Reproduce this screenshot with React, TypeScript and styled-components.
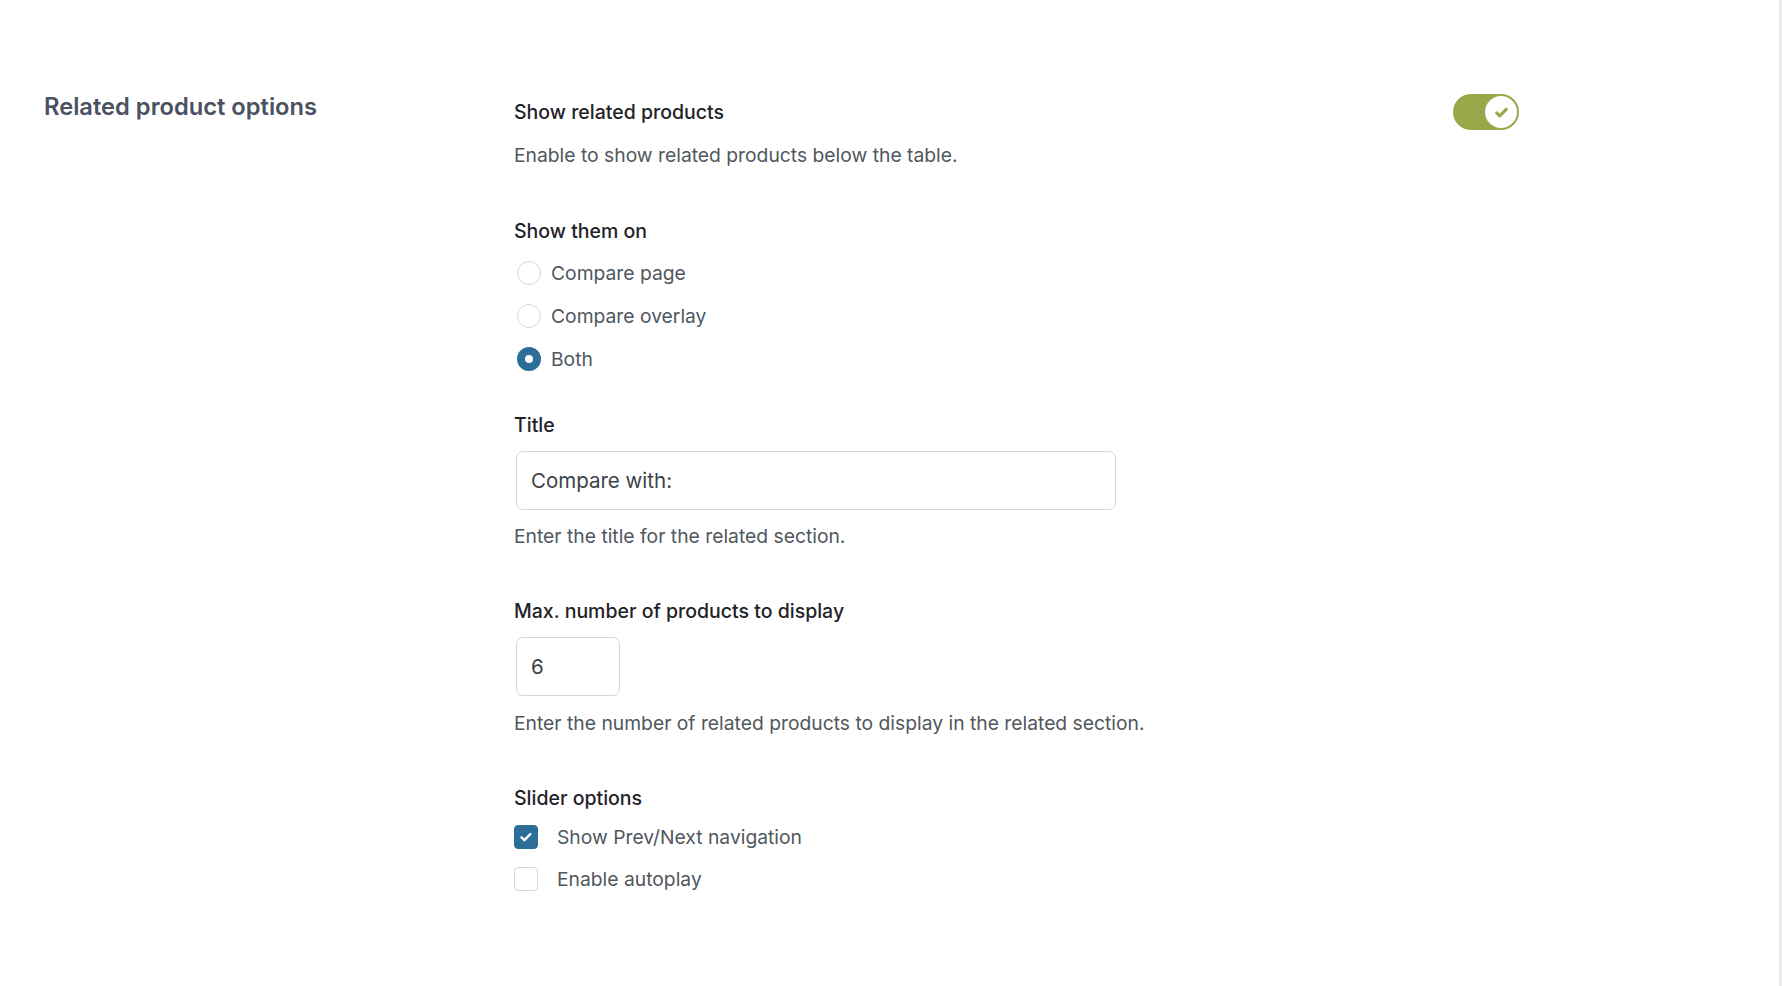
import styled, { createGlobalStyle } from 'styled-components';

const GlobalStyle = createGlobalStyle`
  html, body {
    margin: 0;
    padding: 0;
    background: #ffffff;
    font-family: Inter, "Noto Sans", sans-serif;
    -webkit-font-smoothing: antialiased;
  }
`;

const Page = styled.div`
  min-height: 986px;
  box-sizing: border-box;
  border-right: 3px solid #ebebeb;
  padding: 92px 0 0 44px;
  display: grid;
  grid-template-columns: 470px 1005px;
  align-items: start;
`;

const SectionTitle = styled.h2`
  margin: 0;
  font-size: 23.7px;
  line-height: 30px;
  font-weight: 600;
  color: #4a5160;
`;

const Fields = styled.div`
  display: flex;
  flex-direction: column;
  padding-top: 2px;
`;

const Group = styled.div<{ $gap?: number }>`
  display: flex;
  flex-direction: column;
  margin-bottom: ${(p) => p.$gap ?? 48}px;
`;

const HeadRow = styled.div`
  display: flex;
  justify-content: space-between;
  align-items: center;
`;

const Label = styled.div`
  font-size: 19.5px;
  line-height: 27px;
  font-weight: 500;
  color: #1f2328;
`;

const Help = styled.p<{ $top?: number }>`
  margin: ${(p) => p.$top ?? 13}px 0 0;
  font-size: 19.3px;
  line-height: 27px;
  color: #50575e;
`;

const Toggle = styled.div`
  width: 66px;
  height: 36px;
  border-radius: 18px;
  background: #99a64a;
  display: flex;
  align-items: center;
  justify-content: flex-end;
  padding: 2px;
  box-sizing: border-box;
`;

const Knob = styled.div`
  width: 32px;
  height: 32px;
  border-radius: 50%;
  background: #ffffff;
  display: flex;
  align-items: center;
  justify-content: center;
`;

const OptionList = styled.div<{ $row: number; $top: number }>`
  display: flex;
  flex-direction: column;
  margin-top: ${(p) => p.$top}px;

  & > label {
    height: ${(p) => p.$row}px;
  }
`;

const Option = styled.label`
  display: flex;
  align-items: center;
  font-size: 19.3px;
  color: #50575e;
  cursor: pointer;
`;

const Radio = styled.span<{ $on?: boolean }>`
  width: 24px;
  height: 24px;
  border-radius: 50%;
  box-sizing: border-box;
  margin: 0 10px 0 3px;
  border: ${(p) => (p.$on ? '8px solid #2c6e97' : '1px solid #d4d6da')};
  background: #ffffff;
`;

const Check = styled.span<{ $on?: boolean }>`
  width: 24px;
  height: 24px;
  border-radius: 4px;
  box-sizing: border-box;
  margin: 0 19px 0 0;
  display: flex;
  align-items: center;
  justify-content: center;
  border: 1px solid ${(p) => (p.$on ? '#2c6e97' : '#d4d6da')};
  background: ${(p) => (p.$on ? '#2c6e97' : '#ffffff')};
`;

const Input = styled.input<{ $width: number }>`
  margin: 12px 0 0 2px;
  width: ${(p) => p.$width}px;
  height: 59px;
  box-sizing: border-box;
  border: 1px solid #d5d8dc;
  border-radius: 7px;
  padding: 0 14px;
  font-family: Inter, "Noto Sans", sans-serif;
  font-size: 20.5px;
  color: #3c434a;
  background: #ffffff;
  outline: none;
`;

const Tick = ({ color, size, weight }: { color: string; size: number; weight: number }) => (
  <svg width={size} height={size} viewBox="0 0 16 16" fill="none">
    <path d="M3.5 8.4l2.9 2.8 6-6.2" stroke={color} strokeWidth={weight} strokeLinecap="round" strokeLinejoin="round" />
  </svg>
);

export default function App() {
  return (
    <>
      <GlobalStyle />
      <Page>
        <SectionTitle>Related product options</SectionTitle>
        <Fields>
          <Group $gap={49}>
            <HeadRow>
              <Label>Show related products</Label>
              <Toggle>
                <Knob>
                  <Tick color="#99a64a" size={17} weight={3} />
                </Knob>
              </Toggle>
            </HeadRow>
            <Help $top={12}>Enable to show related products below the table.</Help>
          </Group>

          <Group $gap={32}>
            <Label>Show them on</Label>
            <OptionList $row={43} $top={6}>
              <Option>
                <Radio />
                Compare page
              </Option>
              <Option>
                <Radio />
                Compare overlay
              </Option>
              <Option>
                <Radio $on />
                Both
              </Option>
            </OptionList>
          </Group>

          <Group>
            <Label>Title</Label>
            <Input $width={600} defaultValue="Compare with:" />
            <Help>Enter the title for the related section.</Help>
          </Group>

          <Group $gap={48}>
            <Label>Max. number of products to display</Label>
            <Input $width={104} defaultValue="6" />
            <Help $top={14}>Enter the number of related products to display in the related section.</Help>
          </Group>

          <Group>
            <Label>Slider options</Label>
            <OptionList $row={42} $top={4}>
              <Option>
                <Check $on>
                  <Tick color="#ffffff" size={16} weight={2.4} />
                </Check>
                Show Prev/Next navigation
              </Option>
              <Option>
                <Check />
                Enable autoplay
              </Option>
            </OptionList>
          </Group>
        </Fields>
      </Page>
    </>
  );
}
